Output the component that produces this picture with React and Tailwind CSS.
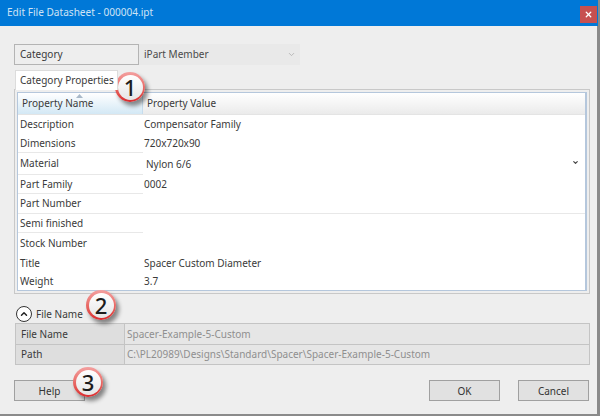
import React from 'react';
import { ChevronDown, ChevronUp, X } from 'lucide-react';

const rows = [
  { name: 'Description', value: 'Compensator Family', h: 'h-[19px]' },
  { name: 'Dimensions', value: '720x720x90', h: 'h-[19px]', line: true },
  { name: 'Material', value: 'Nylon 6/6', h: 'h-[22px]', line: true, select: true },
  { name: 'Part Family', value: '0002', h: 'h-[19px]', line: true },
  { name: 'Part Number', value: '', h: 'h-[20px]', line: true, full: true },
  { name: 'Semi finished', value: '', h: 'h-[19px]', line: true },
  { name: 'Stock Number', value: '', h: 'h-[20px]' },
  { name: 'Title', value: 'Spacer Custom Diameter', h: 'h-[20px]' },
  { name: 'Weight', value: '3.7', h: 'h-[19px]', pb: 'pb-[2px]' },
];

const Badge = ({ n, className }) => (
  <div className={`absolute w-[30px] h-[30px] rounded-full bg-gradient-to-b from-[#f3a0a0] to-[#d9252b] p-[2.5px] shadow-[3px_4px_4px_rgba(0,0,0,0.45)] ${className}`}>
    <div className="w-full h-full rounded-full bg-gradient-to-b from-white to-[#e6e6e6] flex items-center justify-center text-[22px] font-medium text-[#1c1c1c]">
      {n}
    </div>
  </div>
);

const Btn = ({ children }) => (
  <button className="w-[71px] h-[21px] pt-[1px] bg-[#e1e1e1] border border-[#a0a0a0] text-[10px] text-[#333] flex items-center justify-center">
    {children}
  </button>
);

export default function App() {
  return (
    <div className="relative w-[600px] h-[416px] flex flex-col bg-[#8a8a8a] font-['Noto_Sans',sans-serif] text-[10px] text-[#3a3a3a] overflow-hidden">
      <div className="w-[598px] h-[26px] shrink-0 bg-[#0078d7] flex items-start justify-between pr-[1px]">
        <span className="pl-[7px] pt-[5px] text-[10.1px] text-[#cfe3f5]">Edit File Datasheet - 000004.ipt</span>
        <div className="w-[17px] h-[17px] mt-[6px] bg-[#c75050] flex items-center justify-center">
          <X className="w-[9px] h-[9px] text-white" strokeWidth={3.5} />
        </div>
      </div>

      <div className="w-[597px] h-[388px] shrink-0 bg-[#eeeeee] flex flex-col pt-[18px] pl-[14px]">
        <div className="flex h-[21px]">
          <div className="w-[125px] border border-[#b4b4b4] flex items-center pl-[5px]">Category</div>
          <div className="w-[161px] bg-[#e9e9e9] flex items-center justify-between pl-[5px] pr-[4px] text-[#4a4a4a]">
            iPart Member
            <ChevronDown className="w-[9px] h-[9px] text-[#aaa]" />
          </div>
        </div>

        <div className="mt-[5px] ml-[1px] w-[103px] h-[20px] bg-white border-t border-x border-[#dcdcdc] flex items-center pl-[4px] relative z-10 whitespace-nowrap">
          Category Properties
        </div>

        <div className="w-[576px] h-[205px] -mt-[1px] border border-[#c8c8c8] p-[2px]">
          <div className="h-full bg-white border border-[#b5c7dc] border-r-2 flex flex-col">
            <div className="flex h-[22px] shrink-0 border-b border-[#e4e4e4]">
              <div className="relative w-[125px] bg-gradient-to-b from-white to-[#d3e8f5] flex items-end pb-[3px] pl-[4px] border-r border-[#c6dced]">
                Property Name
                <svg className="absolute left-[58px] top-[1px]" width="7" height="4" viewBox="0 0 7 4">
                  <path d="M3.5 0L7 4H0z" fill="#a9b9c9" />
                </svg>
              </div>
              <div className="flex-1 bg-gradient-to-b from-white via-[#f5f5f5] to-[#ebebeb] flex items-end pb-[3px] pl-[4px]">
                Property Value
              </div>
            </div>
            {rows.map((r) => (
              <div key={r.name} className={`flex ${r.h} ${r.pb || ''} shrink-0 relative`}>
                <div className={`w-[125px] pl-[2px] flex items-center ${r.line ? 'border-b border-[#e8e8e8]' : ''}`}>
                  {r.name}
                </div>
                <div className={`flex-1 pl-[1px] flex items-center justify-between pr-[6px] ${r.full ? 'border-b border-[#e8e8e8]' : ''}`}>
                  <span className={r.select ? 'pl-[2px]' : ''}>{r.value}</span>
                  {r.select && <ChevronDown className="w-[7px] h-[7px] text-[#444] -mt-[4px]" strokeWidth={4} />}
                </div>
              </div>
            ))}
          </div>
        </div>

        <div className="flex items-center h-[16px] mt-[12px] ml-[2px] gap-[4px]">
          <div className="w-[16px] h-[16px] rounded-full border border-[#333] bg-white flex items-center justify-center">
            <ChevronUp className="w-[10px] h-[10px] text-[#222]" strokeWidth={3.5} />
          </div>
          <span>File Name</span>
        </div>

        <div className="mt-[1px] ml-[1px] w-[575px] h-[42px] border border-[#c4c4c4] bg-[#e6e6e6] flex flex-col">
          <div className="flex h-[21px] border-b border-[#c4c4c4]">
            <div className="w-[109px] border-r border-[#c4c4c4] bg-[#dedede] flex items-center pl-[5px]">File Name</div>
            <div className="flex-1 flex items-center pl-[2px] text-[#8f8f8f]">Spacer-Example-5-Custom</div>
          </div>
          <div className="flex flex-1">
            <div className="w-[109px] border-r border-[#c4c4c4] bg-[#dedede] flex items-center pl-[5px]">Path</div>
            <div className="flex-1 flex items-center pl-[2px] text-[#8f8f8f]">C:\PL20989\Designs\Standard\Spacer\Spacer-Example-5-Custom</div>
          </div>
        </div>

        <div className="mt-[15px] w-[575px] flex justify-between">
          <Btn>Help</Btn>
          <div className="flex gap-[18px]">
            <Btn>OK</Btn>
            <Btn>Cancel</Btn>
          </div>
        </div>
      </div>

      <Badge n="1" className="left-[115px] top-[72px]" />
      <Badge n="2" className="left-[86px] top-[290px]" />
      <Badge n="3" className="left-[73px] top-[367px]" />
    </div>
  );
}
